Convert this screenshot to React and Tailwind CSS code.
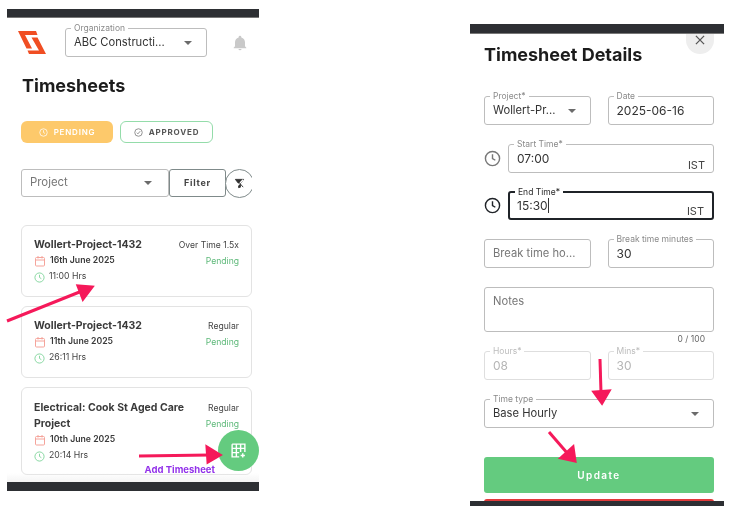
const font = { fontFamily: '"Inter", "Noto Sans", sans-serif' };

function Caret() {
  return <span className="mr-[6px] h-0 w-0 shrink-0 border-x-[4px] border-t-[4px] border-x-transparent border-t-[#6b6b6b]" />;
}

function Field({ label, value, placeholder, caret, suffix, active, disabled, numeric, className = "" }) {
  const border = active
    ? "border-2 border-[#1f2328]"
    : disabled
      ? "border border-[#dedede]"
      : "border border-[#bdbdbd]";
  const size = numeric ? "text-[12px]" : "text-[11.2px]";
  return (
    <div className={`relative flex h-[29px] items-center rounded-[3px] ${active ? "px-[7px]" : "px-2"} ${border} ${className}`}>
      {label && (
        <span className={`absolute -top-[6px] left-[5px] bg-white px-[3px] text-[8.5px] leading-[10px] ${active ? "text-[#2a2a2a]" : disabled ? "text-[#bdbdbd]" : "text-[#8a8a8a]"}`}>
          {label}
        </span>
      )}
      <span className={`flex-1 truncate ${size} ${placeholder ? "text-[#777]" : disabled ? "text-[#b5b5b5]" : "text-[#333]"}`}>
        {value || placeholder}
      </span>
      {caret && <Caret />}
      {suffix && <span className="absolute -bottom-px right-2 text-[11px] text-[#444]">{suffix}</span>}
    </div>
  );
}

function ClockIcon({ className }) {
  return (
    <svg viewBox="0 0 24 24" fill="none" stroke="currentColor" strokeWidth="2" className={className}>
      <circle cx="12" cy="12" r="10" />
      <path d="M12 6v6l4 2.5" />
    </svg>
  );
}

function CalendarIcon() {
  return (
    <svg viewBox="0 0 24 24" fill="none" stroke="#f5a49b" strokeWidth="2" className="h-[12px] w-[12px]">
      <rect x="3" y="5" width="18" height="17" rx="2" />
      <path d="M3 10h18M8 2v5M16 2v5" />
    </svg>
  );
}

function Card({ title, date, hours, type, className = "" }) {
  return (
    <div className={`flex justify-between gap-2 rounded-[6px] border border-[#e3e3e3] bg-white pl-3 pr-3 ${className}`}>
      <div>
        <div className="text-[10.5px] font-bold leading-4 text-[#3a3a3a]">{title}</div>
        <div className="flex h-4 items-center gap-[4px] text-[8.7px] font-semibold text-[#3a3a3a]">
          <CalendarIcon />
          {date}
        </div>
        <div className="flex h-4 items-center gap-[4px] text-[8.7px] text-[#444]">
          <ClockIcon className="h-[11px] w-[11px] text-[#7fd49a]" />
          {hours}
        </div>
      </div>
      <div className="shrink-0 text-right text-[8.6px] leading-4">
        <div className="text-[#444]">{type}</div>
        <div className="text-[#5cb878]">Pending</div>
      </div>
    </div>
  );
}

export default function App() {
  return (
    <div className="relative flex h-[530px] w-[740px] items-start gap-[211px] overflow-hidden bg-white pl-[7px] blur-[0.3px]" style={font}>
      {/* list screen */}
      <div className="relative mt-[9px] h-[482px] w-[252px] overflow-hidden">
        <div className="h-[9px] border-b border-[#777] bg-[#2d2f33]" />
        <div className="mt-[10px] flex items-center pl-[11px]">
          <svg viewBox="0 0 28 23" className="h-[23px] w-[28px]">
            <path d="M0 0H18L19.5 4H7L14 17.5H8.5Z" fill="#f04e23" />
            <path d="M28 23H11L9.5 19.5H21L13.5 6.5H19.5Z" fill="#f04e23" />
          </svg>
          <div className="ml-[19px] w-[142px]">
            <Field label="Organization" value="ABC Constructi..." caret />
          </div>
          <svg viewBox="0 0 24 24" fill="#c9c9c9" className="ml-[25px] h-[16px] w-[16px]">
            <path d="M12 23a2.5 2.5 0 0 0 2.4-2h-4.8a2.5 2.5 0 0 0 2.4 2Zm7.5-6v-6c0-3.6-2-6.6-5.5-7.4V3a2 2 0 0 0-4 0v.6C6.5 4.4 4.5 7.4 4.5 11v6l-2 2v1h19v-1Z" />
          </svg>
        </div>

        <h1 className="ml-[15px] mt-[17px] text-[18px] font-bold leading-6 text-[#1c1c1c]">Timesheets</h1>

        <div className="ml-[14px] mt-[23px] flex gap-[7px]">
          <div className="flex h-[22px] w-[92px] items-center justify-center gap-[6px] rounded-[6px] bg-[#fdc96b] text-[8px] font-semibold tracking-[0.1em] text-white">
            <ClockIcon className="h-[9px] w-[9px]" />
            PENDING
          </div>
          <div className="flex h-[22px] w-[93px] items-center justify-center gap-[6px] rounded-[6px] border border-[#94dcaa] text-[8px] font-bold tracking-[0.1em] text-[#555]">
            <svg viewBox="0 0 24 24" fill="none" stroke="#888" strokeWidth="2.4" className="h-[9px] w-[9px]">
              <circle cx="12" cy="12" r="10" />
              <path d="M7.5 12.5l3 3 6-7" />
            </svg>
            APPROVED
          </div>
        </div>

        <div className="ml-[14px] mt-[26px] flex w-[231px] items-start overflow-hidden">
          <div className="flex h-[28px] w-[148px] shrink-0 items-center justify-between rounded-[3px] border border-[#bdbdbd] pl-2 pr-[10px] text-[11.4px] text-[#777]">
            Project
            <Caret />
          </div>
          <div className="flex h-[28px] w-[57px] shrink-0 items-center justify-center rounded-[3px] border border-[#7f8a8a] text-[9px] font-bold tracking-[0.08em] text-[#444]">
            Filter
          </div>
          <div className="-ml-px flex h-[29px] w-[29px] shrink-0 items-center justify-center rounded-full border border-[#7f8a8a] bg-white">
            <svg viewBox="0 0 24 24" className="h-[11px] w-[11px]" fill="#333" stroke="#333" strokeWidth="2">
              <path d="M3 3h18l-7 9v8l-4 1v-9Z" />
              <path d="M4 20L20 4" stroke="#fff" strokeWidth="3" />
              <path d="M6 4l14 16" fill="none" />
            </svg>
          </div>
        </div>

        <div className="ml-[14px] mt-[27px] flex w-[231px] flex-col gap-[9px]">
          <Card className="h-[72px] pt-[11px]" title="Wollert-Project-1432" date="16th June 2025" hours="11:00 Hrs" type="Over Time 1.5x" />
          <Card className="h-[72px] pt-[11px]" title="Wollert-Project-1432" date="11th June 2025" hours="26:11 Hrs" type="Regular" />
          <Card className="h-[88px] pt-[12px]" title={<>Electrical: Cook St Aged Care<br />Project</>} date="10th June 2025" hours="20:14 Hrs" type="Regular" />
        </div>

        <div className="absolute bottom-0 left-0 right-0 h-[9px] bg-[#2d2f33]" />
        <div className="absolute bottom-[9px] left-0 right-0 h-[9px] bg-gradient-to-b from-transparent to-[#f4f4f4]" />
        <div className="absolute bottom-[15px] right-[44px] text-[9.5px] font-bold leading-3 text-[#9333ea]">Add Timesheet</div>
        <div className="absolute bottom-[20px] right-0 flex h-[41px] w-[41px] items-center justify-center rounded-full bg-[#64cb7f]">
          <svg viewBox="0 0 24 24" fill="none" stroke="#fff" strokeWidth="2" className="h-[17px] w-[17px]">
            <path d="M3 3h18v11M3 3v18h10M3 9h18M3 15h10M9 3v18M15 3v11M18 16v6M15 19h6" />
          </svg>
        </div>
      </div>

      {/* details screen */}
      <div className="relative mt-[24px] h-[482px] w-[254px] overflow-hidden">
        <div className="h-[10px] border-b border-[#777] bg-[#2d2f33]" />
        <div className="absolute right-[10px] top-[10px] flex h-[20px] w-[28px] items-start justify-center rounded-b-[14px] bg-[#eeeeee] text-[#555]">
          <svg viewBox="0 0 24 24" fill="none" stroke="currentColor" strokeWidth="2.2" className="-mt-px h-[14px] w-[14px]">
            <path d="M5 5l14 14M19 5L5 19" />
          </svg>
        </div>
        <div className="pl-[14px] pr-[10px]">
          <h1 className="mt-[9px] text-[18px] font-bold leading-6 text-[#1c1c1c]">Timesheet Details</h1>

          <div className="mt-[29px] flex flex-col gap-[19px]">
            <div className="grid grid-cols-2 gap-[17px]">
              <Field label="Project*" value="Wollert-Pr..." caret />
              <Field numeric label="Date" value="2025-06-16" />
            </div>
            <div className="flex items-center gap-[7px]">
              <ClockIcon className="h-[17px] w-[17px] text-[#777]" />
              <Field numeric className="flex-1" label="Start Time*" value="07:00" suffix="IST" />
            </div>
            <div className="-mt-px flex items-center gap-[7px]">
              <ClockIcon className="h-[17px] w-[17px] text-[#1f2328]" />
              <Field numeric className="flex-1" active label="End Time*" value={<>15:30<span className="border-l border-[#333]" /></>} suffix="IST" />
            </div>
            <div className="grid grid-cols-2 gap-[17px]">
              <Field placeholder="Break time ho..." />
              <Field numeric label="Break time minutes" value="30" />
            </div>
            <div>
              <div className="h-[45px] rounded-[3px] border border-[#bdbdbd] px-2 pt-[5px] text-[11.2px] text-[#777]">Notes</div>
              <div className="mt-[1px] pr-[9px] text-right text-[8.5px] leading-[12px] text-[#666]">0 / 100</div>
            </div>
          </div>

          <div className="mt-[6px] grid grid-cols-2 gap-[17px]">
            <Field numeric disabled label="Hours*" value="08" />
            <Field numeric disabled label="Mins*" value="30" />
          </div>
          <div className="mt-[19px]">
            <Field label="Time type" value="Base Hourly" caret />
          </div>

          <div className="mt-[29px] flex h-[36px] items-center justify-center rounded-[3px] bg-[#64cb7f] text-[10px] font-semibold tracking-[0.14em] text-white">
            Update
          </div>
          <div className="mt-[6px] h-[6px] rounded-t-[3px] bg-[#e03a3a]" />
        </div>
        <div className="absolute left-0 right-0 top-[477px] h-[5px] bg-[#2d2f33]" />
      </div>

      {/* annotation arrows drawn on top of the screenshots */}
      <svg className="pointer-events-none absolute left-0 top-0" width="740" height="530" viewBox="0 0 740 530">
        <g stroke="#f5195a" strokeWidth="3" fill="#f5195a">
          <path d="M7 321L82 291" />
          <path d="M92 287L78 286L83 299Z" />
          <path d="M139 456L210 455" />
          <path d="M220 455L207 447L208 462Z" />
          <path d="M600 359L601 393" />
          <path d="M602 403L594 392L609 391Z" />
          <path d="M549 432L568 454" />
          <path d="M575 461L561 458L573 447Z" />
        </g>
      </svg>
    </div>
  );
}
